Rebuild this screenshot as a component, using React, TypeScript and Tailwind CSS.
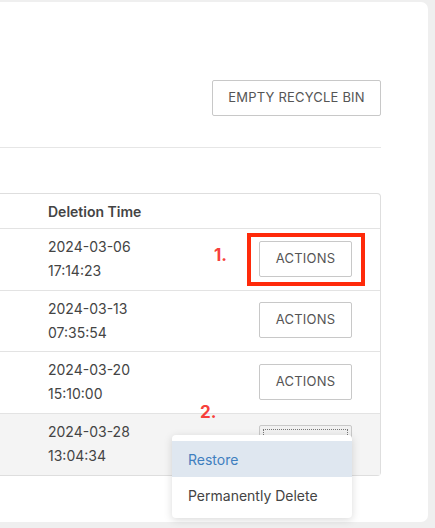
import React from 'react';

interface DeletedItem {
  id: number;
  date: string;
  time: string;
}

const items: DeletedItem[] = [
  { id: 1, date: '2024-03-06', time: '17:14:23' },
  { id: 2, date: '2024-03-13', time: '07:35:54' },
  { id: 3, date: '2024-03-20', time: '15:10:00' },
  { id: 4, date: '2024-03-28', time: '13:04:34' },
];

const font = { fontFamily: 'Inter, "Liberation Sans", sans-serif' };

const ActionsButton = ({ focused }: { focused?: boolean }) => (
  <button
    className={
      'relative h-9 w-[93px] rounded-[2px] border border-[#c8c8c8] text-[13px] tracking-[0.2px] text-[#555] ' +
      (focused ? 'bg-[#f1f1f1]' : 'bg-white')
    }
  >
    {focused ? (
      <span className="absolute inset-[3px] border border-dotted border-[#777]" />
    ) : (
      'ACTIONS'
    )}
  </button>
);

const App = () => {
  return (
    <div className="h-[528px] w-[435px] overflow-hidden bg-[#efefef] pt-[2px] pr-[7px]" style={font}>
      <div className="h-[520px] rounded-r-[7px] bg-white pr-[47px]">
        <div className="flex justify-end pt-[78px]">
          <button className="h-9 w-[169px] rounded-[2px] border border-[#c8c8c8] bg-white text-[13px] tracking-[0.2px] text-[#555]">
            EMPTY RECYCLE BIN
          </button>
        </div>

        <div className="mt-[31px] border-t border-[#e6e6e6]" />

        <div className="mt-[45px] rounded-r-[4px] border-y border-r border-[#dedede] text-[14px] text-[#333]">
          <div className="flex h-[35px] items-center border-b border-[#e3e3e3] pl-12 font-semibold text-[#444]">
            Deletion Time
          </div>

          {items.map((item, i) => {
            const last = i === items.length - 1;
            return (
              <div
                key={item.id}
                className={
                  'flex h-[61.5px] items-center pl-12 pr-[28px] ' +
                  (last ? 'bg-[#f4f4f4]' : 'border-b border-[#e3e3e3]')
                }
              >
                <div className="flex-1 leading-6 text-[#444]">
                  <div>{item.date}</div>
                  <div>{item.time}</div>
                </div>
                <div className="relative self-start pt-[11.5px]">
                  <ActionsButton focused={last} />

                  {i === 0 && (
                    <>
                      <div className="absolute left-[-12px] right-[-13px] top-[3.5px] bottom-[-9px] border-[4px] border-[#ff2a0a]" />
                      <span className="absolute left-[-45px] top-[16px] text-[17px] font-bold leading-5 text-[#f7403b]">
                        1.
                      </span>
                    </>
                  )}

                  {last && (
                    <>
                      <span className="absolute left-[-59px] top-[-12px] text-[17px] font-bold leading-5 text-[#f7403b]">
                        2.
                      </span>
                      <div className="absolute right-0 top-[21.5px] z-10 w-[180px] rounded-[4px] bg-white pt-[6px] pb-[5px] shadow-[0_2px_8px_rgba(0,0,0,0.15)]">
                        <div className="flex h-9 items-center bg-[#dfe7f0] px-4 text-[#3f7fbf]">Restore</div>
                        <div className="flex h-9 items-center px-4 text-[#444]">Permanently Delete</div>
                      </div>
                    </>
                  )}
                </div>
              </div>
            );
          })}
        </div>
      </div>
    </div>
  );
};

export default App;
